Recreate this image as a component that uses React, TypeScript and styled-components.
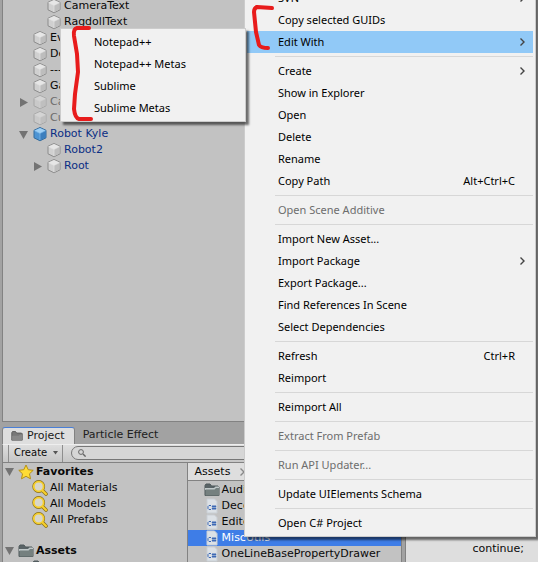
import React from "react";
import styled, { createGlobalStyle, css } from "styled-components";

const GlobalStyle = createGlobalStyle`
  * { box-sizing: border-box; }
  html, body { margin: 0; height: 100%; overflow: hidden; background: #a2a2a2; }
  button, input { font: inherit; color: inherit; margin: 0; border: 0; }
`;

const Editor = styled.main`
  position: relative;
  display: grid;
  grid-template-columns: 299fr 101fr;
  height: 100vh;
  overflow: hidden;
  background: #a2a2a2;
  font: 11px/16px "DejaVu Sans", Verdana, sans-serif;
  color: #090909;
`;

const Dock = styled.div`
  display: flex;
  flex-direction: column;
  min-height: 0;
  min-width: 0;
  padding-left: 2px;
`;

const Hierarchy = styled.section`
  flex: 3 1 0;
  min-height: 0;
  overflow: hidden;
  background: #c2c2c2;
  border: solid #828282;
  border-width: 0 1px 1px;
`;

const TreeList = styled.ul<{ $scrolled?: boolean }>`
  list-style: none;
  margin: ${p => (p.$scrolled ? "-2px 0 0" : "0")};
  padding: 0;
`;

const TreeRow = styled.li<{ $depth?: number; $tone?: "prefab" | "off"; $bold?: boolean; $gap?: boolean }>`
  display: flex;
  align-items: center;
  height: 16px;
  margin-top: ${p => (p.$gap ? 15 : 0)}px;
  padding-left: ${p => 1 + (p.$depth || 0) * 14}px;
  white-space: nowrap;
  font-weight: ${p => (p.$bold ? 700 : 400)};
  color: ${p => (p.$tone === "prefab" ? "#0b2e84" : p.$tone === "off" ? "#6c6c6c" : "#090909")};
`;

const Fold = styled.button`
  display: flex;
  width: 11px;
  flex: none;
  padding: 0;
  background: none;
`;

const FoldGap = styled.span`
  width: 11px;
  flex: none;
`;

const IconSlot = styled.span`
  display: flex;
  flex: none;
  width: 16px;
  height: 16px;
  margin: 0 2px 0 3px;
`;

const Project = styled.section`
  flex: 1 1 0;
  display: flex;
  flex-direction: column;
  min-height: 0;
  overflow: hidden;
`;

const Tabs = styled.div`
  display: flex;
  flex: none;
  height: 22px;
  padding: 5px 0 0;
`;

const Tab = styled.button<{ $active?: boolean }>`
  display: flex;
  align-items: center;
  gap: 4px;
  padding: 0 8px;
  background: none;
  white-space: nowrap;
  color: #202020;
  ${p => p.$active && css`
    background: #dedede;
    border-top: 1px solid #4a7fd6;
    border-left: 1px solid #828282;
    border-right: 1px solid #828282;
    border-radius: 3px 3px 0 0;
    padding: 0 9px 0 8px;
  `}
`;

const Toolbar = styled.div`
  display: flex;
  align-items: center;
  flex: none;
  height: 19px;
  padding-left: 5px;
  border-left: 1px solid #828282;
  border-top: 1px solid #eeeeee;
  border-bottom: 1px solid #828282;
  background: linear-gradient(#dedede, #c6c6c6);
`;

const CreateButton = styled.button`
  display: flex;
  align-items: center;
  gap: 6px;
  height: 17px;
  padding: 0 4px 0 5px;
  border: solid #8e8e8e;
  border-width: 0 1px;
  background: none;
  font-size: 10px;
`;

const Search = styled.label`
  display: flex;
  align-items: center;
  flex: 1;
  height: 14px;
  margin: 0 6px 0 8px;
  padding-left: 6px;
  border: 1px solid #777;
  border-radius: 7px;
  background: #d6d6d6;
`;

const SearchInput = styled.input`
  flex: 1;
  min-width: 0;
  height: 12px;
  padding: 0 4px;
  background: none;
  outline: 0;
`;

const Browser = styled.div`
  display: grid;
  grid-template-columns: 46fr 54fr;
  flex: 1;
  min-height: 0;
  background: #c2c2c2;
  border-left: 1px solid #828282;
`;

const Sidebar = styled.div`
  padding-top: 1px;
  overflow: hidden;
`;

const Files = styled.div`
  border: solid #828282;
  border-width: 0 1px;
  overflow: hidden;
`;

const Crumb = styled.nav`
  display: flex;
  align-items: center;
  gap: 8px;
  height: 18px;
  margin-bottom: 1px;
  padding: 1px 0 0 7px;
  background: #dedede;
  border-bottom: 1px solid #828282;
`;

const CrumbLink = styled.a`
  color: inherit;
  text-decoration: none;
`;

const FileRow = styled.li<{ $selected?: boolean }>`
  display: flex;
  align-items: center;
  height: 16px;
  padding-left: 13px;
  white-space: nowrap;
  ${p => p.$selected && css`
    background: #3e7de7;
    color: #fff;
  `}
`;

const Inspector = styled.section`
  display: flex;
  align-items: flex-end;
  margin-left: 3px;
  padding: 0 14px 5px;
  background: #dedede;
  border-left: 1px solid #828282;
  overflow: hidden;
`;

const Code = styled.code`
  flex: 1;
  text-align: right;
  font: inherit;
`;

const Menu = styled.div`
  position: absolute;
  padding: 2px;
  background: #f1f1f1;
  border: 1px solid #ccc;
  box-shadow: 3px 3px 2px rgba(0, 0, 0, 0.55);
  font: 11px/22px "Noto Sans", "Segoe UI", sans-serif;
  color: #000;
`;

const AssetMenu = styled(Menu)`
  right: 2px;
  bottom: 25px;
  width: 292px;
`;

const EditorMenu = styled(Menu)`
  left: 60px;
  top: 28px;
  width: 186px;
`;

const MenuItem = styled.button<{ $active?: boolean }>`
  display: flex;
  align-items: center;
  width: 100%;
  height: 22px;
  padding: 0 7px 0 31px;
  text-align: left;
  white-space: nowrap;
  background: ${p => (p.$active ? "#91c9f7" : "none")};
  &:disabled { color: #6d6d6d; }
`;

const MenuLabel = styled.span`
  flex: 1;
`;

const Shortcut = styled.span`
  margin-right: 11px;
`;

const Rule = styled.hr`
  height: 1px;
  margin: 3px 0 3px 28px;
  border: 0;
  background: #d7d7d7;
`;

const Marks = styled.svg`
  position: absolute;
  left: 0;
  top: 0;
  pointer-events: none;
`;

const Cube = ({ tone }: { tone?: "prefab" | "off" }) => {
  const blue = tone === "prefab";
  return (
    <svg width="16" height="16" viewBox="0 0 16 16" opacity={tone === "off" ? 0.5 : 1} strokeLinejoin="round">
      <path d="M8 1.500 14 4.300v7.500L8 14.800 2 11.800V4.300z" fill={blue ? "#4d94d3" : "#d0d0d0"} stroke={blue ? "#336a9c" : "#8c8c8c"} />
      <path d="M8 2 13.500 4.500 8 7.400 2.500 4.500z" fill={blue ? "#9fd0f5" : "#e6e6e6"} />
      <path d="M8 7.400 13.500 4.700v6.900L8 14.300z" fill={blue ? "#3b7fbe" : "#bdbdbd"} />
      <path d="M2.500 4.700 8 7.400 13.500 4.700M8 7.400v6.800" fill="none" stroke={blue ? "#7fbaea" : "#e2e2e2"} strokeWidth=".7" />
    </svg>
  );
};

const Arrow = ({ open }: { open?: boolean }) => (
  <svg width="11" height="11" viewBox="0 0 11 11">
    <path d={open ? "M1 2h9L5.500 10z" : "M2 1v9L10 5.500z"} fill="#737373" />
  </svg>
);

const Folder = ({ size = 16, flat }: { size?: number; flat?: boolean }) => (
  <svg width={size} height={size} viewBox="0 0 16 16">
    <path d="M1 13.500V3.500L2 2h4l1.500 2H14l1 1v8.500z" fill={flat ? "#777" : "#596366"} stroke={flat ? "#4d4d4d" : "#4f595b"} />
    {!flat && <path d="M1 6h9l1.500-1.500H15V8H1z" fill="#c1c9ca" />}
    <path d="M1.500 7.500h9L12 6h3v7.500H1.500z" fill={flat ? "#888" : "#75807f"} />
  </svg>
);

const Star = () => (
  <svg width="16" height="16" viewBox="0 0 16 16">
    <path d="m8 1 2.200 4.700 5 .6-3.700 3.500 1 5L8 12.300l-4.500 2.500 1-5L.800 6.300l5-.6z" fill="#ffdc35" stroke="#b59016" strokeLinejoin="round" />
  </svg>
);

const Lens = () => (
  <svg width="16" height="16" viewBox="0 0 16 16" fill="none" strokeLinecap="round">
    <circle cx="6.700" cy="6.500" r="4.900" stroke="#8a6f14" strokeWidth="3" />
    <path d="m10.500 10.500 3.500 3.500" stroke="#8a6f14" strokeWidth="3.600" />
    <circle cx="6.700" cy="6.500" r="4.900" fill="#d8d6ca" stroke="#f6cf2d" strokeWidth="1.800" />
    <path d="m10.500 10.500 3.500 3.500" stroke="#f6cf2d" strokeWidth="2.200" />
  </svg>
);

const Script = () => (
  <svg width="16" height="16" viewBox="0 0 16 16">
    <path d="M3 1h7.500L13 3.500V15H3z" fill="#dce1e6" stroke="#c9cfd5" />
    <path d="M7 7.500H5L4 8.500v2l1 1h2M9 7v5M11 7v5M7.800 8.500h4.400M7.800 10.500h4.400" fill="none" stroke="#3c68b4" />
  </svg>
);

const Chevron = ({ stroke = "#444" }: { stroke?: string }) => (
  <svg width="8" height="10" viewBox="0 0 8 10">
    <path d="m2.500 1.500 3.500 3.500-3.500 3.500" fill="none" stroke={stroke} strokeWidth="1.400" />
  </svg>
);

type Node = { name: string; depth: number; fold?: "open" | "closed"; tone?: "prefab" | "off" };

const nodes: Node[] = [
  { name: "CameraText", depth: 2 },
  { name: "RagdollText", depth: 2 },
  { name: "Events", depth: 1 },
  { name: "Debug", depth: 1 },
  { name: "------", depth: 1 },
  { name: "Game", depth: 1 },
  { name: "Cars", depth: 1, fold: "closed", tone: "off" },
  { name: "Cube", depth: 1, tone: "off" },
  { name: "Robot Kyle", depth: 1, fold: "open", tone: "prefab" },
  { name: "Robot2", depth: 2, tone: "prefab" },
  { name: "Root", depth: 2, fold: "closed", tone: "prefab" },
];

type Entry = { label: string; keys?: string; sub?: boolean; off?: boolean; active?: boolean } | null;

const entries: Entry[] = [
  { label: "SVN", sub: true },
  { label: "Copy selected GUIDs" },
  { label: "Edit With", sub: true, active: true },
  null,
  { label: "Create", sub: true },
  { label: "Show in Explorer" },
  { label: "Open" },
  { label: "Delete" },
  { label: "Rename" },
  { label: "Copy Path", keys: "Alt+Ctrl+C" },
  null,
  { label: "Open Scene Additive", off: true },
  null,
  { label: "Import New Asset..." },
  { label: "Import Package", sub: true },
  { label: "Export Package..." },
  { label: "Find References In Scene" },
  { label: "Select Dependencies" },
  null,
  { label: "Refresh", keys: "Ctrl+R" },
  { label: "Reimport" },
  null,
  { label: "Reimport All" },
  null,
  { label: "Extract From Prefab", off: true },
  null,
  { label: "Run API Updater...", off: true },
  null,
  { label: "Update UIElements Schema" },
  null,
  { label: "Open C# Project" },
];

const files = ["Audio", "Decor", "Editor", "MiscUtils", "OneLineBasePropertyDrawer"];

export default function App() {
  return (
    <Editor>
      <GlobalStyle />
      <Dock>
        <Hierarchy aria-label="Hierarchy">
          <TreeList $scrolled>
            {nodes.map(n => (
              <TreeRow key={n.name} $depth={n.depth} $tone={n.tone}>
                {n.fold ? <Fold aria-label={`Toggle ${n.name}`}><Arrow open={n.fold === "open"} /></Fold> : <FoldGap />}
                <IconSlot><Cube tone={n.tone === "prefab" && n.depth > 1 ? undefined : n.tone} /></IconSlot>
                {n.name}
              </TreeRow>
            ))}
          </TreeList>
        </Hierarchy>
        <Project aria-label="Project">
          <Tabs>
            <Tab $active><Folder size={12} flat />Project</Tab>
            <Tab>Particle Effect</Tab>
          </Tabs>
          <Toolbar>
            <CreateButton>
              Create
              <svg width="5" height="4" viewBox="0 0 5 4"><path d="M0 0h5L2.500 3.500z" fill="#555" /></svg>
            </CreateButton>
            <Search>
              <svg width="8" height="8" viewBox="0 0 8 8" fill="none" stroke="#666">
                <circle cx="3" cy="3" r="2.400" /><path d="m5 5 2.600 2.600" strokeWidth="1.400" />
              </svg>
              <SearchInput aria-label="Search assets" />
            </Search>
          </Toolbar>
          <Browser>
            <Sidebar>
              <TreeList>
                <TreeRow $bold><Fold aria-label="Toggle Favorites"><Arrow open /></Fold><IconSlot><Star /></IconSlot>Favorites</TreeRow>
                {["All Materials", "All Models", "All Prefabs"].map(t => (
                  <TreeRow key={t} $depth={1}><FoldGap /><IconSlot><Lens /></IconSlot>{t}</TreeRow>
                ))}
                <TreeRow $bold $gap><Fold aria-label="Toggle Assets"><Arrow open /></Fold><IconSlot><Folder /></IconSlot>Assets</TreeRow>
                <TreeRow $depth={1}><FoldGap /><IconSlot><Folder /></IconSlot>Scenes</TreeRow>
              </TreeList>
            </Sidebar>
            <Files>
              <Crumb><CrumbLink href="#assets">Assets</CrumbLink><Chevron stroke="#888" /></Crumb>
              <TreeList>
                {files.map(f => (
                  <FileRow key={f} $selected={f === "MiscUtils"}>
                    <IconSlot>{f === "Audio" ? <Folder /> : <Script />}</IconSlot>{f}
                  </FileRow>
                ))}
              </TreeList>
            </Files>
          </Browser>
        </Project>
      </Dock>
      <Inspector aria-label="Script preview"><Code>continue;</Code></Inspector>

      <AssetMenu role="menu" aria-label="Assets">
        {entries.map((e, i) => e ? (
          <MenuItem key={i} role="menuitem" $active={e.active} disabled={e.off}>
            <MenuLabel>{e.label}</MenuLabel>
            {e.keys && <Shortcut>{e.keys}</Shortcut>}
            {e.sub && <Chevron />}
          </MenuItem>
        ) : <Rule key={i} />)}
      </AssetMenu>
      <EditorMenu role="menu" aria-label="Edit With">
        {["Notepad++", "Notepad++ Metas", "Sublime", "Sublime Metas"].map(t => (
          <MenuItem key={t} role="menuitem">{t}</MenuItem>
        ))}
      </EditorMenu>
      <Marks width="300" height="130" viewBox="0 0 300 130" fill="none" stroke="#e81c1c" strokeWidth="4" strokeLinecap="round" strokeLinejoin="round" aria-hidden="true">
        <path d="M89 28H77Q73 29 74 36L77 54 78 72 75 94 74 109Q75 118 79 119L91 119" />
        <path d="M272 8 257 7Q254 8 254 12L256 32 259 45Q261 48 268 48" />
      </Marks>
    </Editor>
  );
}
